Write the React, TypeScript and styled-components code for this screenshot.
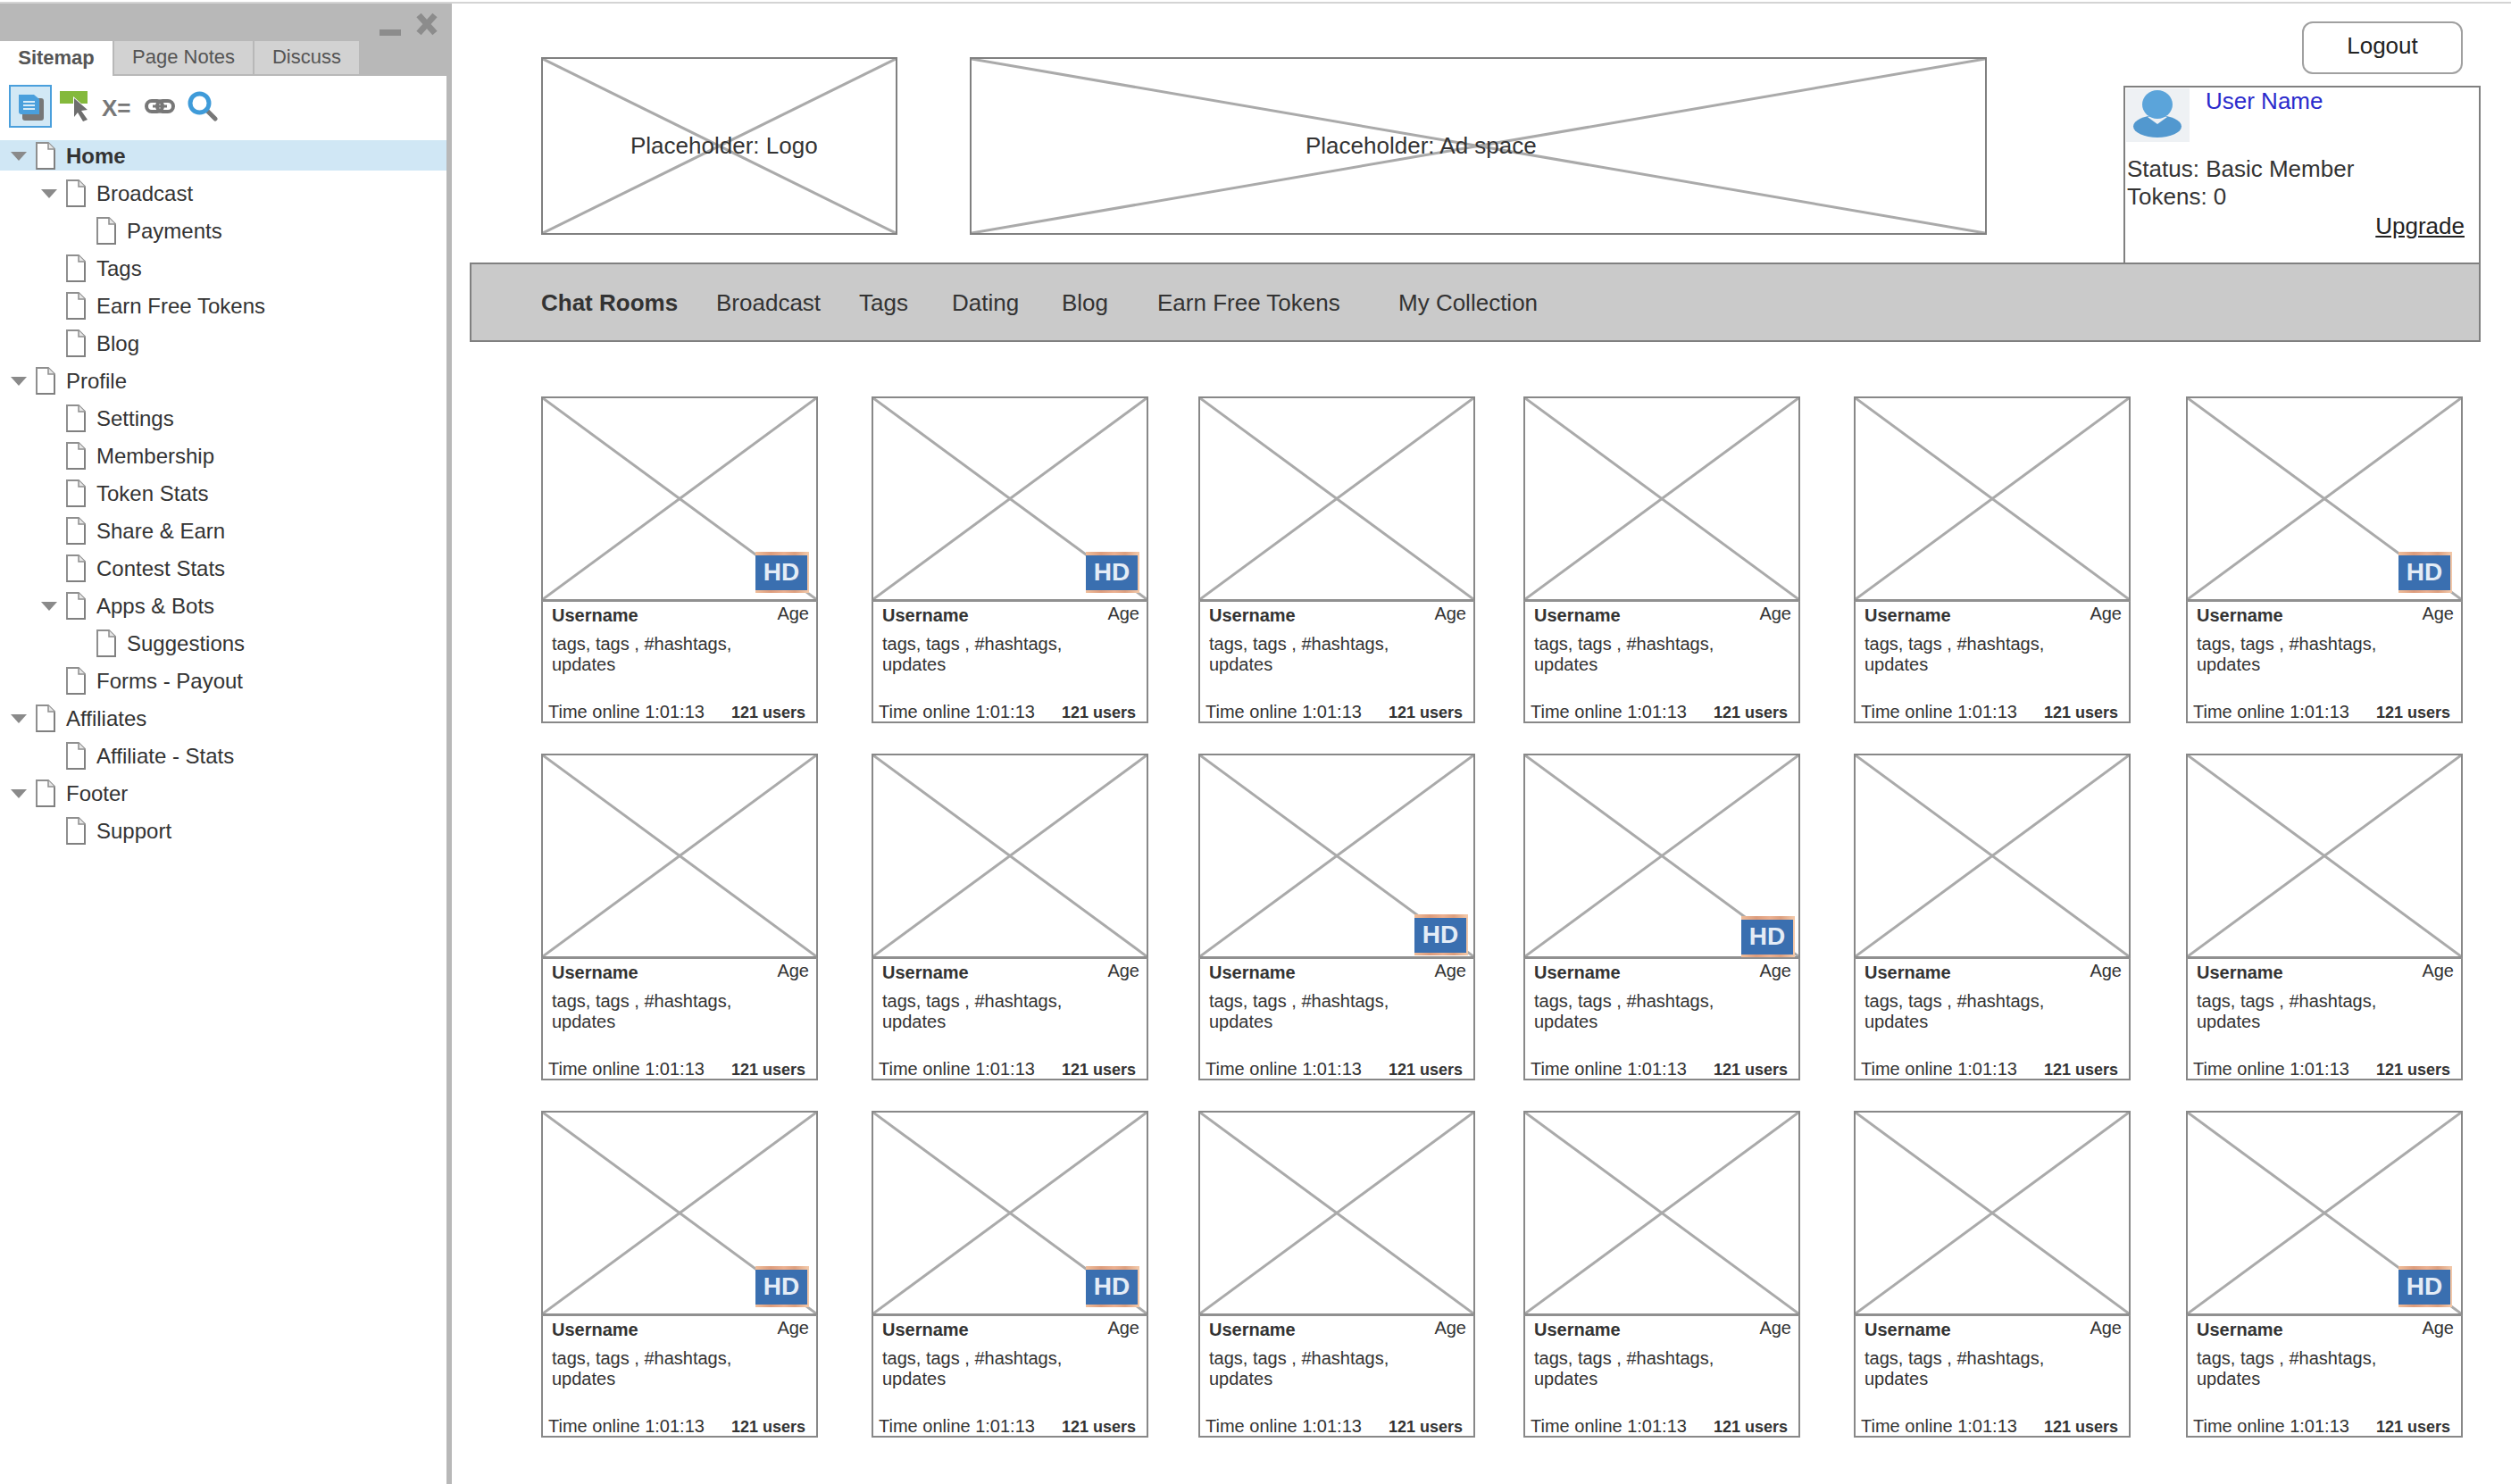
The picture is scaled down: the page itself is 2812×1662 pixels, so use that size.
import React from "react";
import styled, { createGlobalStyle } from "styled-components";

const Global = createGlobalStyle`
  html, body { margin: 0; padding: 0; background: #fff; }
  body { font-family: "Liberation Sans", Arial, sans-serif; color: #333; }
`;

const Page = styled.div`
  width: 2812px;
  height: 1662px;
  overflow: hidden;
  padding-top: 2px;
  box-sizing: border-box;
  background: #fff;
`;
const TopRule = styled.div`
  height: 2px;
  background: #d4d4d4;
`;
const Shell = styled.div`
  display: flex;
  height: 1658px;
`;
const Sidebar = styled.aside`
  width: 506px;
  flex: none;
  box-sizing: border-box;
  border-right: 6px solid #b8b8b8;
  display: flex;
  flex-direction: column;
  background: #fff;
`;
const SideHead = styled.div`
  height: 81px;
  background: #b8b8b8;
  position: relative;
  display: flex;
  align-items: flex-end;
  flex: none;
`;
const WindowControls = styled.svg`
  position: absolute;
  left: 422px;
  top: 8px;
`;
const Tab = styled.div<{ $active?: boolean; $w: number }>`
  width: ${(p) => p.$w}px;
  height: ${(p) => (p.$active ? 39 : 37)}px;
  margin-bottom: ${(p) => (p.$active ? 0 : 2)}px;
  margin-right: 2px;
  background: ${(p) => (p.$active ? "#fff" : "#d2d2d2")};
  color: #555;
  font-size: 22px;
  font-weight: ${(p) => (p.$active ? 700 : 400)};
  display: flex;
  align-items: center;
  justify-content: center;
  box-sizing: border-box;
  padding-bottom: 2px;
`;
const Toolbar = styled.div`
  height: 72px;
  flex: none;
  display: grid;
  grid-template-columns: 56px repeat(4, 48px);
  align-items: center;
  padding: 0 0 5px 10px;
  box-sizing: border-box;
`;
const ToolActive = styled.div`
  width: 48px;
  height: 48px;
  box-sizing: border-box;
  border: 2px solid #4a9fdc;
  background: #d2e8f5;
  display: flex;
  align-items: center;
  justify-content: center;
`;
const VarIcon = styled.span`
  font-size: 26px;
  font-weight: 700;
  color: #777;
  line-height: 1;
  padding-top: 4px;
  white-space: nowrap;
`;
const Tree = styled.div`
  display: flex;
  flex-direction: column;
  gap: 8px;
`;
const Row = styled.div<{ $level: number; $selected?: boolean }>`
  height: 34px;
  display: flex;
  align-items: center;
  padding-left: ${(p) => 12 + p.$level * 34}px;
  background: ${(p) => (p.$selected ? "#d0e7f5" : "transparent")};
  font-size: 24px;
  font-weight: ${(p) => (p.$selected ? 700 : 400)};
  color: #333;
`;
const Caret = styled.span<{ $show?: boolean }>`
  width: 0;
  height: 0;
  border-left: 9px solid transparent;
  border-right: 9px solid transparent;
  border-top: 10px solid ${(p) => (p.$show ? "#8a8a8a" : "transparent")};
  margin-right: 10px;
  margin-top: 1px;
`;
const RowLabel = styled.span`
  margin-left: 12px;
  padding-top: 2px;
  white-space: nowrap;
`;

const Main = styled.main`
  flex: 1;
  min-width: 0;
`;
const Header = styled.header`
  height: 290px;
  display: flex;
  padding-left: 100px;
`;
const Placeholder = styled.div<{ $w: number; $pad: number }>`
  width: ${(p) => p.$w}px;
  height: 199px;
  margin-top: 60px;
  box-sizing: border-box;
  border: 2px solid #808080;
  position: relative;
  display: flex;
  align-items: center;
  padding-left: ${(p) => p.$pad}px;
  font-size: 26px;
  color: #333;
  flex: none;
`;
const Cross = styled.svg`
  position: absolute;
  inset: 0;
  width: 100%;
  height: 100%;
`;
const PlaceLabel = styled.span`
  position: relative;
  white-space: nowrap;
`;
const AdGap = styled.div<{ $w: number }>`
  width: ${(p) => p.$w}px;
  flex: none;
`;
const Account = styled.div`
  width: 400px;
  flex: none;
  display: flex;
  flex-direction: column;
  align-items: flex-end;
`;
const Logout = styled.button`
  width: 180px;
  height: 59px;
  margin: 20px 20px 13px 0;
  border: 2px solid #a0a0a0;
  border-radius: 12px;
  background: #fff;
  color: #222;
  font: 400 26px "Liberation Sans", Arial, sans-serif;
  padding: 0 0 4px;
`;
const UserBox = styled.div`
  width: 400px;
  height: 198px;
  box-sizing: border-box;
  border: 2px solid #808080;
  border-bottom: none;
  font-size: 26px;
  line-height: 31px;
  color: #333;
  display: flex;
  flex-direction: column;
`;
const UserTop = styled.div`
  display: flex;
  padding: 1px 0 0 1px;
`;
const Avatar = styled.svg`
  flex: none;
  display: block;
`;
const UserName = styled.a`
  color: #2a2acc;
  margin-left: 18px;
  margin-top: -1px;
`;
const Status = styled.div`
  padding-left: 2px;
  margin-top: 15px;
  white-space: nowrap;
`;
const Upgrade = styled.a`
  align-self: flex-end;
  margin-right: 16px;
  margin-top: 2px;
  color: #222;
  text-decoration: underline;
`;
const Nav = styled.nav`
  margin-left: 20px;
  width: 2252px;
  height: 89px;
  box-sizing: border-box;
  border: 2px solid #808080;
  background: #cacaca;
  display: grid;
  grid-template-columns: 196px 160px 104px 123px 107px 270px auto;
  align-items: center;
  padding: 1px 0 0 78px;
  font-size: 26px;
  color: #333;
`;
const NavItem = styled.a<{ $active?: boolean }>`
  font-weight: ${(p) => (p.$active ? 700 : 400)};
  white-space: nowrap;
`;
const Grid = styled.section`
  margin: 61px 0 0 100px;
  display: grid;
  grid-template-columns: 370px 366px 364px 370px 372px 310px;
  row-gap: 34px;
`;
const Card = styled.article`
  width: 310px;
  height: 366px;
  display: flex;
  flex-direction: column;
`;
const Thumb = styled.div`
  height: 230px;
  box-sizing: border-box;
  border: 2px solid #888;
  border-bottom: 3px solid #909090;
  position: relative;
  flex: none;
`;
const Badge = styled.div<{ $right: number; $bottom: number }>`
  position: absolute;
  right: ${(p) => p.$right}px;
  bottom: ${(p) => p.$bottom}px;
  width: 60px;
  height: 46px;
  box-sizing: border-box;
  background: #3a6fb0;
  border-style: solid;
  border-width: 4px 2px 3px 0;
  border-image: linear-gradient(90deg, #f0bf9c, #dd9c7c 30%, #ecb090 55%, #dd9f7e 75%, #f3c8a8) 1;
  color: #e4ecf6;
  font-size: 28px;
  font-weight: 700;
  display: flex;
  align-items: center;
  justify-content: center;
  line-height: 1;
  padding-bottom: 2px;
`;
const Info = styled.div`
  flex: 1;
  box-sizing: border-box;
  border: 2px solid #888;
  border-top: none;
  display: flex;
  flex-direction: column;
  font-size: 20px;
  line-height: 23px;
  color: #333;
`;
const InfoTop = styled.div`
  display: flex;
  justify-content: space-between;
  padding: 4px 8px 0 10px;
`;
const Username = styled.span`
  font-weight: 700;
`;
const Age = styled.span`
  margin-top: -2px;
`;
const Tags = styled.div`
  padding: 9px 60px 0 10px;
`;
const InfoBottom = styled.div`
  margin-top: auto;
  display: flex;
  justify-content: space-between;
  align-items: baseline;
  padding: 0 12px 0 6px;
  line-height: 19px;
`;
const Users = styled.span`
  font-size: 18px;
  font-weight: 700;
`;

const DocIcon = () => (
  <svg width="22" height="31" viewBox="0 0 22 31" style={{ flex: "none" }}>
    <path d="M1 1H14L21 8V30H1Z" fill="#fff" stroke="#8f8f8f" strokeWidth="2" />
    <path d="M14 1V8H21" fill="#e6e6e6" stroke="#8f8f8f" strokeWidth="1.5" />
    <path d="M1 30H21V9" fill="none" stroke="#808080" strokeWidth="2" />
  </svg>
);

const tree: { label: string; level: number; caret?: boolean; selected?: boolean }[] = [
  { label: "Home", level: 0, caret: true, selected: true },
  { label: "Broadcast", level: 1, caret: true },
  { label: "Payments", level: 2 },
  { label: "Tags", level: 1 },
  { label: "Earn Free Tokens", level: 1 },
  { label: "Blog", level: 1 },
  { label: "Profile", level: 0, caret: true },
  { label: "Settings", level: 1 },
  { label: "Membership", level: 1 },
  { label: "Token Stats", level: 1 },
  { label: "Share & Earn", level: 1 },
  { label: "Contest Stats", level: 1 },
  { label: "Apps & Bots", level: 1, caret: true },
  { label: "Suggestions", level: 2 },
  { label: "Forms - Payout", level: 1 },
  { label: "Affiliates", level: 0, caret: true },
  { label: "Affiliate - Stats", level: 1 },
  { label: "Footer", level: 0, caret: true },
  { label: "Support", level: 1 },
];

const navItems = ["Chat Rooms", "Broadcast", "Tags", "Dating", "Blog", "Earn Free Tokens", "My Collection"];

// Offsets of the HD badge inside each thumbnail, by row then column (null: no badge).
type Hd = { right: number; bottom: number } | null;
const badges: Hd[] = [
  { right: 8, bottom: 7 }, { right: 8, bottom: 7 }, null, null, null, { right: 10, bottom: 7 },
  null, null, { right: 6, bottom: 1 }, { right: 4, bottom: -1 }, null, null,
  { right: 8, bottom: 7 }, { right: 8, bottom: 7 }, null, null, null, { right: 10, bottom: 7 },
];

const CrossLines = ({ w, h, color = "#aaaaaa" }: { w: number; h: number; color?: string }) => (
  <Cross viewBox={`0 0 ${w} ${h}`} preserveAspectRatio="none">
    <line x1="0" y1="0" x2={w} y2={h} stroke={color} strokeWidth="3" />
    <line x1={w} y1="0" x2="0" y2={h} stroke={color} strokeWidth="3" />
  </Cross>
);

export default function App() {
  return (
    <Page>
      <Global />
      <TopRule />
      <Shell>
        <Sidebar>
          <SideHead>
            <WindowControls width="72" height="32" viewBox="0 0 72 32">
              <rect x="3" y="21" width="24" height="7" fill="#8c8c8c" />
              <path d="M47 5L65 25M65 5L47 25" stroke="#8c8c8c" strokeWidth="7" />
            </WindowControls>
            <Tab $active $w={126}>Sitemap</Tab>
            <Tab $w={155}>Page Notes</Tab>
            <Tab $w={117}>Discuss</Tab>
          </SideHead>
          <Toolbar>
            <div>
              <ToolActive>
                <svg width="32" height="32" viewBox="0 0 32 32">
                  <rect x="7" y="7" width="24" height="25" rx="3" fill="#777" />
                  <path d="M3 3H20L26 8V25H6Q3 25 3 22Z" fill="#4a9fdc" />
                  <path d="M8 11H21M8 15H21M8 19H21" stroke="#d8ecf8" strokeWidth="2" />
                </svg>
              </ToolActive>
            </div>
            <svg width="34" height="36" viewBox="0 0 34 36">
              <path d="M1 1H32V15H25L16 7V15H1Z" fill="#84b93c" />
              <path d="M17 9L32 22L25 23L32 33L27 35L21 25L17 30Z" fill="#6e6e6e" />
            </svg>
            <VarIcon>X=</VarIcon>
            <svg width="34" height="18" viewBox="0 0 34 18">
              <rect x="2" y="3" width="18" height="12" rx="6" fill="none" stroke="#777" strokeWidth="4" />
              <rect x="14" y="3" width="18" height="12" rx="6" fill="none" stroke="#777" strokeWidth="4" />
              <path d="M9 9H25" stroke="#777" strokeWidth="3" />
            </svg>
            <svg width="34" height="34" viewBox="0 0 34 34">
              <path d="M21 21L31 31" stroke="#777" strokeWidth="5" strokeLinecap="round" />
              <circle cx="13.5" cy="13.5" r="10.5" fill="none" stroke="#3f9bd9" strokeWidth="5" />
            </svg>
          </Toolbar>
          <Tree>
            {tree.map((t) => (
              <Row key={t.label} $level={t.level} $selected={t.selected}>
                <Caret $show={t.caret} />
                <DocIcon />
                <RowLabel>{t.label}</RowLabel>
              </Row>
            ))}
          </Tree>
        </Sidebar>
        <Main>
          <Header>
            <Placeholder $w={399} $pad={98}>
              <CrossLines w={395} h={195} />
              <PlaceLabel>Placeholder: Logo</PlaceLabel>
            </Placeholder>
            <AdGap $w={81} />
            <Placeholder $w={1139} $pad={374}>
              <CrossLines w={1135} h={195} />
              <PlaceLabel>Placeholder: Ad space</PlaceLabel>
            </Placeholder>
            <AdGap $w={153} />
            <Account>
              <Logout>Logout</Logout>
              <UserBox>
                <UserTop>
                  <Avatar width="71" height="60" viewBox="0 0 71 60">
                    <rect width="71" height="60" fill="#eef1f4" />
                    <ellipse cx="35" cy="42.5" rx="27" ry="12.5" fill="#5298cf" />
                    <path d="M24 32L35 40L46 32L35 28Z" fill="#eef1f4" />
                    <ellipse cx="35" cy="18" rx="17" ry="16" fill="#5ba4da" />
                  </Avatar>
                  <UserName>User Name</UserName>
                </UserTop>
                <Status>
                  Status: Basic Member
                  <br />
                  Tokens: 0
                </Status>
                <Upgrade>Upgrade</Upgrade>
              </UserBox>
            </Account>
          </Header>
          <Nav>
            {navItems.map((n, i) => (
              <NavItem key={n} $active={i === 0}>{n}</NavItem>
            ))}
          </Nav>
          <Grid>
            {badges.map((b, i) => (
              <Card key={i}>
                <Thumb>
                  <CrossLines w={306} h={225} />
                  {b && <Badge $right={b.right} $bottom={b.bottom}>HD</Badge>}
                </Thumb>
                <Info>
                  <InfoTop>
                    <Username>Username</Username>
                    <Age>Age</Age>
                  </InfoTop>
                  <Tags>tags, tags , #hashtags, updates</Tags>
                  <InfoBottom>
                    <span>Time online 1:01:13</span>
                    <Users>121 users</Users>
                  </InfoBottom>
                </Info>
              </Card>
            ))}
          </Grid>
        </Main>
      </Shell>
    </Page>
  );
}
